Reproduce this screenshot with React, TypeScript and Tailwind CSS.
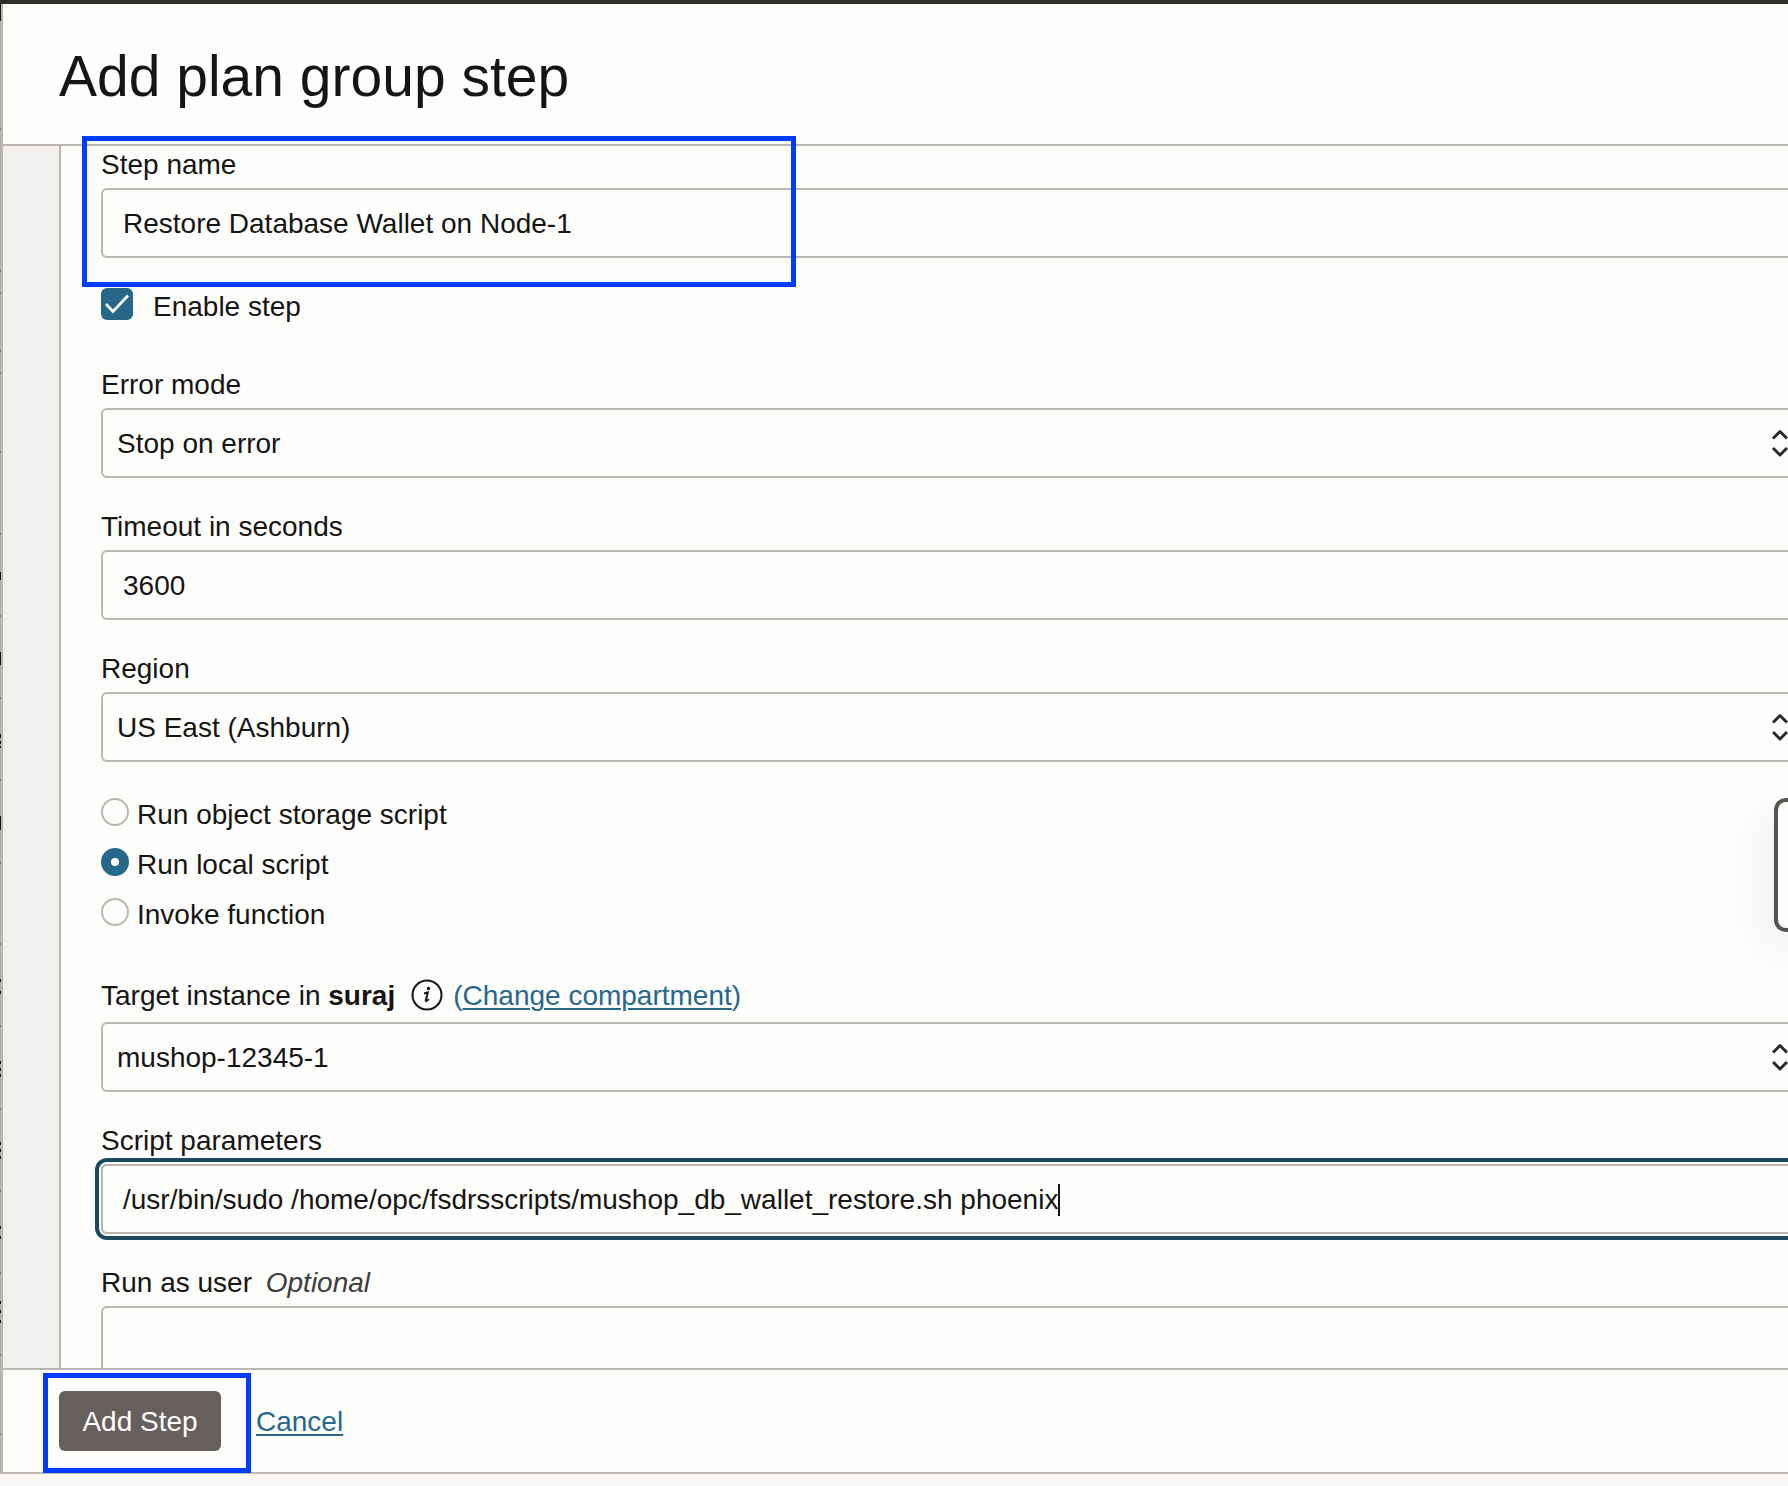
import type { ReactNode } from 'react';

const field =
  'h-[70px] w-full rounded-l-md border-2 border-r-0 border-[#bcb6b1] bg-[#fdfdfc] pt-0.5 pl-5 outline-none';
const labelText = 'block pb-1.5 leading-[34px]';

function Chevrons() {
  return (
    <svg
      aria-hidden="true"
      className="pointer-events-none absolute right-0 top-1/2 h-[30px] w-4 -translate-y-1/2"
      viewBox="0 0 16 30"
      fill="none"
      stroke="#2b2a29"
      strokeWidth="3"
      strokeLinejoin="round"
    >
      <path d="M1 10.500 8 3.500l7 7" />
      <path d="M1 20 8 27l7-7" />
    </svg>
  );
}

function SelectField({ id, label, value }: { id: string; label: ReactNode; value: string }) {
  return (
    <div>
      {label}
      <div className="relative">
        <select
          id={id}
          defaultValue={value}
          className="block h-[70px] w-full appearance-none rounded-l-md border-2 border-r-0 border-[#bcb6b1] bg-[#fdfdfc] pt-0.5 pl-3.5 outline-none"
        >
          <option>{value}</option>
        </select>
        <Chevrons />
      </div>
    </div>
  );
}

function RadioOption({ label, checked }: { label: string; checked?: boolean }) {
  return (
    <label className="flex h-[50px] items-center gap-2">
      <input
        type="radio"
        name="script-kind"
        defaultChecked={checked}
        className="-mt-1.5 size-7 appearance-none rounded-full border-2 border-[#bcb6b1] checked:border-10 checked:border-[#27688a]"
      />
      {label}
    </label>
  );
}

const rowLines = [129, 271, 293, 351, 373, 452, 534, 616, 698, 780, 863, 944, 1026, 1109, 1191, 1273, 1355, 1434];
const glyphEdges = [
  [572, 8], [652, 13], [734, 4], [741, 3], [746, 2], [816, 14], [979, 3], [991, 3],
  [1061, 3], [1068, 3], [1074, 3], [1142, 3], [1149, 3], [1156, 3], [1226, 3], [1236, 3],
  [1301, 3], [1310, 3], [1320, 3],
];

function PageSliver() {
  return (
    <svg aria-hidden="true" className="h-full w-px shrink-0 bg-[#b1b0af]">
      <rect width="1" height="17" fill="#1b1918" />
      {rowLines.map((y) => (
        <rect key={y} y={y - 5} width="1" height="2" fill="#7d7a78" />
      ))}
      {glyphEdges.map(([y, h]) => (
        <rect key={y} y={y - 4} width="1" height={h} fill="#151413" />
      ))}
    </svg>
  );
}

export default function App() {
  return (
    <div className="flex h-screen flex-col overflow-hidden bg-[#fbf9f8] pb-3 font-['Liberation_Sans',Arial,sans-serif] text-[28px] text-[#161513]">
      <div className="h-1 shrink-0 bg-[#312d2a]" />
      <div className="relative flex min-h-0 flex-1 border-b-2 border-[#bcb6b1]">
        <PageSliver />
        <main className="flex min-w-0 flex-1 flex-col border-l-2 border-[#bcb6b1] bg-[#fdfdfc]">
          <header className="border-b-2 border-[#bcb6b1] px-14 pt-10 pb-9">
            <h1 className="text-[57px] leading-16">Add plan group step</h1>
          </header>

          <div className="flex min-h-0 flex-1">
            <div className="w-14 shrink-0 bg-[#f3f1f0]" />
            <form className="min-w-0 flex-1 border-l-2 border-[#bcb6b1] pt-0.5 pl-10">
              <div className="relative">
                <label htmlFor="step-name" className={labelText}>Step name</label>
                <input id="step-name" className={field} defaultValue="Restore Database Wallet on Node-1" />
                <div className="pointer-events-none absolute -top-3 -left-[19px] h-[151px] w-[714px] border-5 border-[#003cff]" />
              </div>

              <label className="flex items-center gap-5 pt-[31px] leading-9">
                <span className="relative -mt-1.5 size-8">
                  <input type="checkbox" defaultChecked className="block size-8 appearance-none rounded-md bg-[#27688a]" />
                  <svg aria-hidden="true" className="pointer-events-none absolute inset-0" viewBox="0 0 32 32" fill="none" stroke="#fff" strokeWidth="2.600">
                    <path d="M5 16 12 23.500 27 7.500" />
                  </svg>
                </span>
                Enable step
              </label>

              <div className="flex flex-col gap-8 pt-[43px]">
                <SelectField
                  id="error-mode"
                  value="Stop on error"
                  label={<label htmlFor="error-mode" className={labelText}>Error mode</label>}
                />
                <div>
                  <label htmlFor="timeout" className={labelText}>Timeout in seconds</label>
                  <input id="timeout" className={field} defaultValue="3600" />
                </div>
                <SelectField
                  id="region"
                  value="US East (Ashburn)"
                  label={<label htmlFor="region" className={labelText}>Region</label>}
                />
              </div>

              <fieldset className="pt-7">
                <RadioOption label="Run object storage script" />
                <RadioOption label="Run local script" checked />
                <RadioOption label="Invoke function" />
              </fieldset>

              <div className="flex flex-col gap-8 pt-[38px]">
                <SelectField
                  id="target"
                  value="mushop-12345-1"
                  label={
                    <div className="flex items-center pb-2 leading-9">
                      <label htmlFor="target">
                        Target instance in <b>suraj</b>
                      </label>
                      <svg aria-label="Information" role="img" className="-mt-0.5 mr-2.5 ml-4 size-8 shrink-0" viewBox="0 0 32 32" fill="none" stroke="#161513">
                        <circle cx="16" cy="16" r="14.500" strokeWidth="2" />
                        <circle cx="17.500" cy="9.500" r="1.700" fill="#161513" stroke="none" />
                        <path d="M13 14.500c2-.3 3-.7 3.800-1L14.800 21c-.4 1.600.8 1.700 3-.8" strokeWidth="2" />
                      </svg>
                      <a href="#compartment" className="text-[#27688a]">
                        (<span className="underline decoration-2 underline-offset-3">Change compartment</span>)
                      </a>
                    </div>
                  }
                />
                <div>
                  <label htmlFor="params" className={labelText}>Script parameters</label>
                  <div className="flex h-[70px] items-center rounded-l-md border-2 border-r-0 border-[#bcb6b1] pt-0.5 pl-5 shadow-[0_0_0_2px_#fdfdfc,0_0_0_6px_#1d4960]">
                    <input
                      id="params"
                      className="field-sizing-content outline-none"
                      defaultValue="/usr/bin/sudo /home/opc/fsdrsscripts/mushop_db_wallet_restore.sh phoenix"
                    />
                    <span className="h-8 w-0.5 bg-[#161513]" />
                  </div>
                </div>
                <div>
                  <label htmlFor="run-as" className={labelText}>
                    Run as user <i className="ml-1.5 text-[#3f3d3b]">Optional</i>
                  </label>
                  <input id="run-as" className={field} />
                </div>
              </div>
            </form>
          </div>

          <footer className="relative flex shrink-0 items-center border-t-2 border-[#bcb6b1] bg-[#fdfdfc] px-14 py-[21px]">
            <div className="relative mr-[35px]">
              <button type="button" className="block h-[60px] w-[162px] rounded-md bg-[#665f5b] pt-0.5 text-white">
                Add Step
              </button>
              <div className="pointer-events-none absolute -top-[18px] -left-4 h-[100px] w-[208px] border-5 border-[#003cff]" />
            </div>
            <a href="#cancel" className="pt-0.5 text-[#27688a] underline decoration-2 underline-offset-3">Cancel</a>
          </footer>
        </main>
        <div className="absolute top-[794px] right-0 h-[134px] w-3.5 rounded-l-xl border-4 border-r-0 border-[#575350] bg-[#fdfdfc] shadow-[0_16px_48px_rgba(20,20,40,0.16)]" />
      </div>
    </div>
  );
}
